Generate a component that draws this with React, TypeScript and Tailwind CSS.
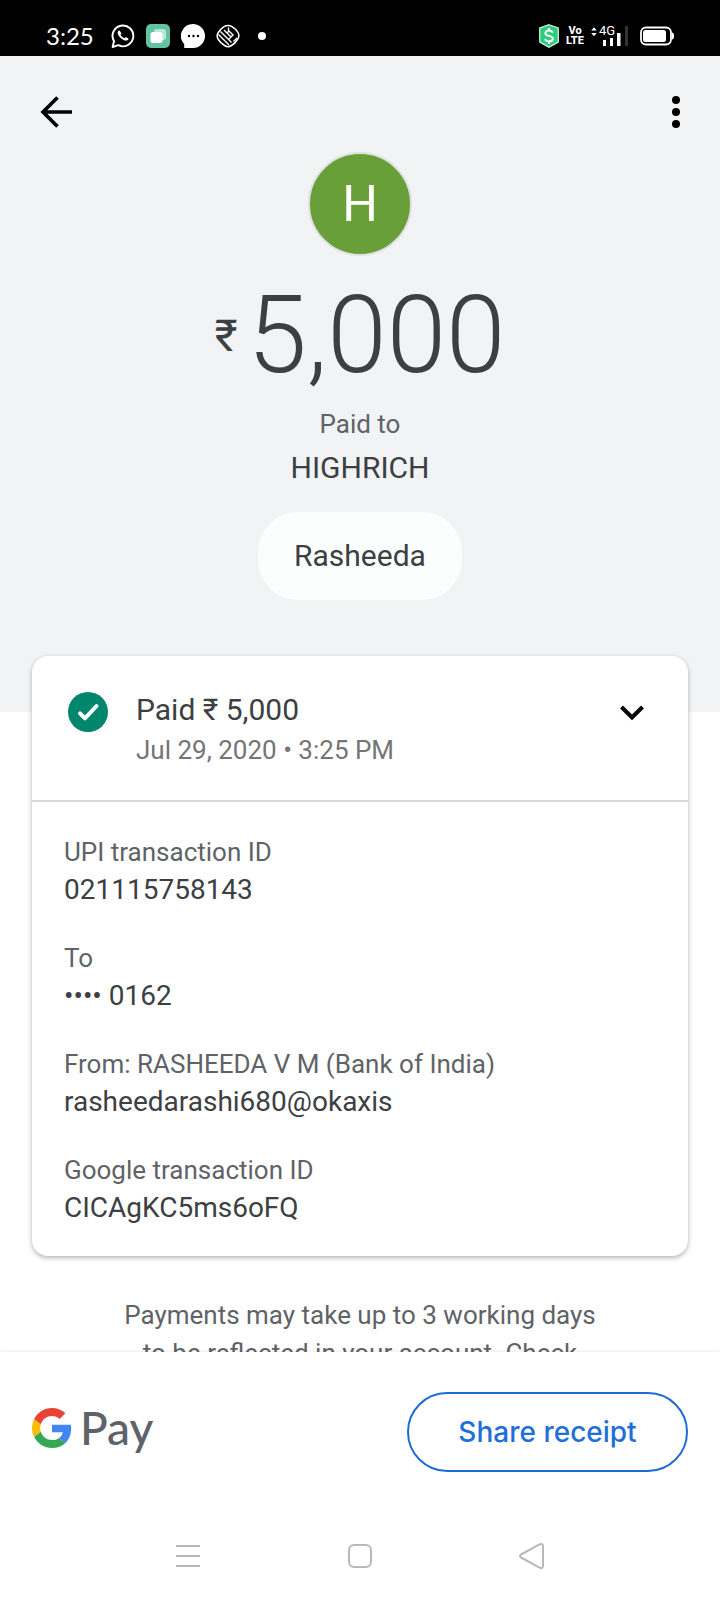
const details = [
  { label: "UPI transaction ID", value: "021115758143" },
  { label: "To", value: "•••• 0162" },
  { label: "From: RASHEEDA V M (Bank of India)", value: "rasheedarashi680@okaxis" },
  { label: "Google transaction ID", value: "CICAgKC5ms6oFQ" },
];

function StatusBar() {
  return (
    <div className="flex h-14 shrink-0 items-center justify-between bg-black px-[46px] pt-4 text-white">
      <div className="flex items-center gap-[11px]">
        <span className="mr-[6px] font-['Lato',sans-serif] text-[24px] leading-8">3:25</span>
        <svg className="size-6" viewBox="0 0 24 24" fill="none" aria-hidden="true">
          <path d="M1.600 23 3 17.200A10.400 10.400 0 1 1 7.300 21.200Z" stroke="#fff" strokeWidth="1.900" strokeLinejoin="round" />
          <path d="M8.600 6.600c-.5-.2-1.200 0-1.600.8-.8 1.500-.2 3.600 2.200 6.100 2.500 2.500 5.200 3.700 7.200 2.800.8-.4 1.200-1.200 1-1.900l-2.600-1.500-1.500 1.300c-1.800-.7-3-1.900-3.800-3.600l1-1.200Z" fill="#fff" />
        </svg>
        <svg className="size-6" viewBox="0 0 24 24" aria-hidden="true">
          <rect width="24" height="24" rx="5" fill="#62c3a2" />
          <rect x="8" y="5" width="12" height="11" rx="2.500" fill="#b9e6d6" />
          <rect x="4.500" y="8" width="12" height="11" rx="2.500" fill="#fff" />
        </svg>
        <svg className="size-6" viewBox="0 0 24 24" aria-hidden="true">
          <path d="M12 0a12 12 0 1 1 0 24H3.200v-3.800A12 12 0 0 1 12 0Z" fill="#fff" />
          <circle cx="8" cy="12" r="1.200" />
          <circle cx="12.500" cy="12" r="1.200" />
          <circle cx="17" cy="12" r="1.200" />
        </svg>
        <svg className="size-6" viewBox="0 0 24 24" fill="none" stroke="#fff" aria-hidden="true">
          <path d="M8 2.600Q12 .2 16 2.600Q20 5 22 8.500Q24 12 21.500 15.500Q19 19.500 15.500 21.500Q12 23.800 8.500 21.500Q4.500 19 2.300 15.500Q0 12 2.300 8.500Q4.500 5 8 2.600Z" strokeWidth="1.500" />
          <path d="M2.500 10.500 13 21M4.500 7.500l11 11M8 6l3 3 1.500-1.500V3.500M11 9l4 4 2-2-4-4M15 13l-2 2M17.500 17.500l3.500-3.500" strokeWidth="1.400" />
        </svg>
        <svg className="size-6" viewBox="0 0 24 24" aria-hidden="true">
          <circle cx="11" cy="12" r="4" fill="#fff" />
        </svg>
      </div>
      <div className="flex items-center">
        <svg className="mr-2 h-6 w-5" viewBox="0 0 20 24" fill="none" aria-hidden="true">
          <path d="m10 .7 9.300 3.200v14.200L10 23.300.7 18.100V3.900Z" fill="#2fcb7f" stroke="#d5f5e5" strokeWidth="1.200" />
          <path d="M13.800 8.700C13.200 7.200 11.700 6.500 10 6.500c-2.100 0-3.600 1-3.600 2.700 0 3.700 7.400 1.800 7.400 5.500 0 1.700-1.600 2.700-3.800 2.700-2 0-3.500-.9-4-2.400M10 4v2.500M10 17.400V20" stroke="#fff" strokeWidth="1.900" />
        </svg>
        <div className="mr-2 flex w-4 flex-col items-center text-[11px] font-extrabold leading-[10px]">
          <span>Vo</span>
          <span>LTE</span>
        </div>
        <div className="relative mr-3 h-5 w-[37px]">
          <svg className="h-5 w-[37px]" viewBox="0 0 37 20" aria-hidden="true">
            <path d="M.2 4.500 3 1.200l2.800 3.300ZM.2 7 3 10.300 5.800 7Z" fill="#fff" />
            <path d="M12 14h3v6h-3ZM19 12h3v8h-3ZM26 7h3.500v13H26Z" fill="#fff" />
            <path d="M34 0h3v20h-3Z" fill="#333" />
          </svg>
          <span className="absolute -top-px left-2 text-[13px] leading-3">4G</span>
        </div>
        <svg className="h-5 w-[34px]" viewBox="0 0 34 20" fill="none" aria-hidden="true">
          <rect x="1" y="1.500" width="30" height="17" rx="5" stroke="#fff" strokeWidth="1.800" />
          <path d="M32 6.500q2 0 2 3.500t-2 3.500Z" fill="#fff" />
          <rect x="3" y="4" width="23" height="12" rx="2.500" fill="#fff" />
        </svg>
      </div>
    </div>
  );
}

function Hero() {
  return (
    <header className="bg-[#f1f3f5] pb-28">
      <div className="flex items-center justify-between px-7 pt-10 pb-6">
        <button type="button" aria-label="Back" className="flex h-8 w-14 items-center justify-center">
          <svg className="size-8" viewBox="0 0 32 32" fill="none" stroke="#000" strokeWidth="3.600" aria-hidden="true">
            <path d="M32 16H3M17.500 1.500 3 16l14.500 14.500" />
          </svg>
        </button>
        <button type="button" aria-label="More options" className="flex h-8 w-8 items-center justify-center">
          <svg className="size-8" viewBox="0 0 32 32" aria-hidden="true">
            <circle cx="16" cy="4" r="4" />
            <circle cx="16" cy="16" r="4" />
            <circle cx="16" cy="28" r="4" />
          </svg>
        </button>
      </div>
      <div className="flex flex-col items-center">
        <div className="flex size-26 items-center justify-center rounded-full border-2 border-[#dde1e0] bg-[#689f38] text-[50px] leading-none text-white">
          H
        </div>
        <h1 className="mt-5 flex items-center gap-[10px] text-[107px] font-light leading-[120px] text-[#3c4043]">
          <span className="text-[44px] font-normal leading-[60px]">₹</span>
          <span>5,000</span>
        </h1>
        <p className="mt-2 text-[26px] leading-10 text-[#5f6368]">Paid to</p>
        <p className="text-[30px] leading-[48px] text-[#3c4043]">HIGHRICH</p>
        <div className="mt-5 flex h-22 min-w-[204px] items-center justify-center rounded-[40px] bg-[#fcfefe] px-8 text-[30px] leading-10 text-[#3c4043]">
          Rasheeda
        </div>
      </div>
    </header>
  );
}

function DetailsCard() {
  return (
    <section className="relative mx-8 -mt-14 rounded-2xl bg-white shadow-[0_2px_5px_rgba(0,0,0,0.3)]">
      <div className="flex items-start border-b-2 border-[#dadada] px-9 py-8">
        <svg className="mt-1 size-10 shrink-0" viewBox="0 0 40 40" fill="none" aria-hidden="true">
          <circle cx="20" cy="20" r="20" fill="#00866c" />
          <path d="m12 21.300 5 5L28.500 14" stroke="#fff" strokeWidth="4" strokeLinecap="round" strokeLinejoin="round" />
        </svg>
        <div className="ml-7 flex-1">
          <h2 className="text-[30px] leading-11 text-[#3c4043]">Paid ₹ 5,000</h2>
          <p className="text-[26px] leading-9 text-[#757575]">Jul 29, 2020 • 3:25 PM</p>
        </div>
        <button type="button" aria-label="Hide details" className="mt-1 flex size-10 items-center justify-center">
          <svg className="size-6" viewBox="0 0 24 24" fill="none" stroke="#000" strokeWidth="4" aria-hidden="true">
            <path d="m1.500 7 10.500 10.500L22.500 7" />
          </svg>
        </button>
      </div>
      <dl className="flex flex-col gap-[30px] px-8 pt-8 pb-7">
        {details.map((item) => (
          <div key={item.label}>
            <dt className="text-[26px] leading-9 text-[#5f6368]">{item.label}</dt>
            <dd className="text-[28px] leading-10 text-[#3c4043]">{item.value}</dd>
          </div>
        ))}
      </dl>
    </section>
  );
}

function GooglePayLogo() {
  return (
    <div className="flex items-center gap-2 pb-2">
      <svg className="size-10" viewBox="0 0 48 48" role="img" aria-label="Google">
        <path fill="#4285F4" d="M46.980 24.550c0-1.570-.15-3.090-.38-4.550H24v9.020h12.940c-.58 2.960-2.260 5.480-4.780 7.180l7.730 6c4.510-4.180 7.090-10.360 7.090-17.650z" />
        <path fill="#FBBC05" d="M10.530 28.590A14.500 14.500 0 0 1 9.770 24c0-1.600.27-3.140.76-4.590l-7.980-6.190A23.900 23.900 0 0 0 0 24c0 3.880.92 7.540 2.560 10.780z" />
        <path fill="#34A853" d="M24 48c6.480 0 11.930-2.130 15.890-5.810l-7.730-6c-2.150 1.450-4.920 2.300-8.160 2.300-6.260 0-11.570-4.220-13.470-9.910l-7.980 6.190C6.510 42.620 14.620 48 24 48z" />
        <path fill="#EA4335" d="M24 9.500c3.540 0 6.710 1.220 9.210 3.600l6.850-6.850C35.900 2.380 30.470 0 24 0 14.620 0 6.510 5.380 2.560 13.220l7.980 6.190C12.430 13.720 17.740 9.500 24 9.500z" />
      </svg>
      <span className="font-['Lato',sans-serif] text-[46px] font-medium leading-[56px] text-[#5f6368]">Pay</span>
    </div>
  );
}

function Footer() {
  return (
    <footer className="relative shrink-0 bg-white shadow-[0_-1px_3px_rgba(0,0,0,0.08)]">
      <div className="flex items-center justify-between px-8 pt-10">
        <GooglePayLogo />
        <button
          type="button"
          className="h-20 min-w-[281px] rounded-full border-2 border-[#1a6dd6] px-8 font-['Inter',sans-serif] text-[28px] font-medium leading-10 text-[#1f6fd8]"
        >
          Share receipt
        </button>
      </div>
      <nav aria-label="System" className="flex items-center justify-between px-44 pt-16 pb-6">
        <button type="button" aria-label="Recent apps" className="flex h-10 items-center">
          <svg className="size-6" viewBox="0 0 24 24" stroke="#b8b8b8" strokeWidth="2" aria-hidden="true">
            <path d="M0 2h24M0 12h24M0 22h24" />
          </svg>
        </button>
        <button type="button" aria-label="Home" className="flex h-10 items-center">
          <svg className="size-6" viewBox="0 0 24 24" fill="none" stroke="#b8b8b8" strokeWidth="2" aria-hidden="true">
            <rect x="1" y="1" width="22" height="22" rx="5" />
          </svg>
        </button>
        <button type="button" aria-label="Back" className="flex h-10 items-center">
          <svg className="h-[26px] w-[25px]" viewBox="0 0 25 26" fill="none" stroke="#b8b8b8" strokeWidth="2" strokeLinejoin="round" aria-hidden="true">
            <path d="M2 11.500 20.500 1.400Q24 0 24 3.500v19q0 3.500-3.500 2.100L2 14.500Q0 13 2 11.500Z" />
          </svg>
        </button>
      </nav>
    </footer>
  );
}

export default function App() {
  return (
    <div className="flex h-screen flex-col bg-white font-['Roboto',sans-serif]">
      <StatusBar />
      <main className="min-h-0 flex-1 overflow-y-auto [scrollbar-width:none]">
        <Hero />
        <DetailsCard />
        <p className="mx-auto mt-10 max-w-[500px] text-center text-[26px] leading-[38px] text-[#5f6368]">
          Payments may take up to 3 working days to be reflected in your account. Check
        </p>
      </main>
      <Footer />
    </div>
  );
}
